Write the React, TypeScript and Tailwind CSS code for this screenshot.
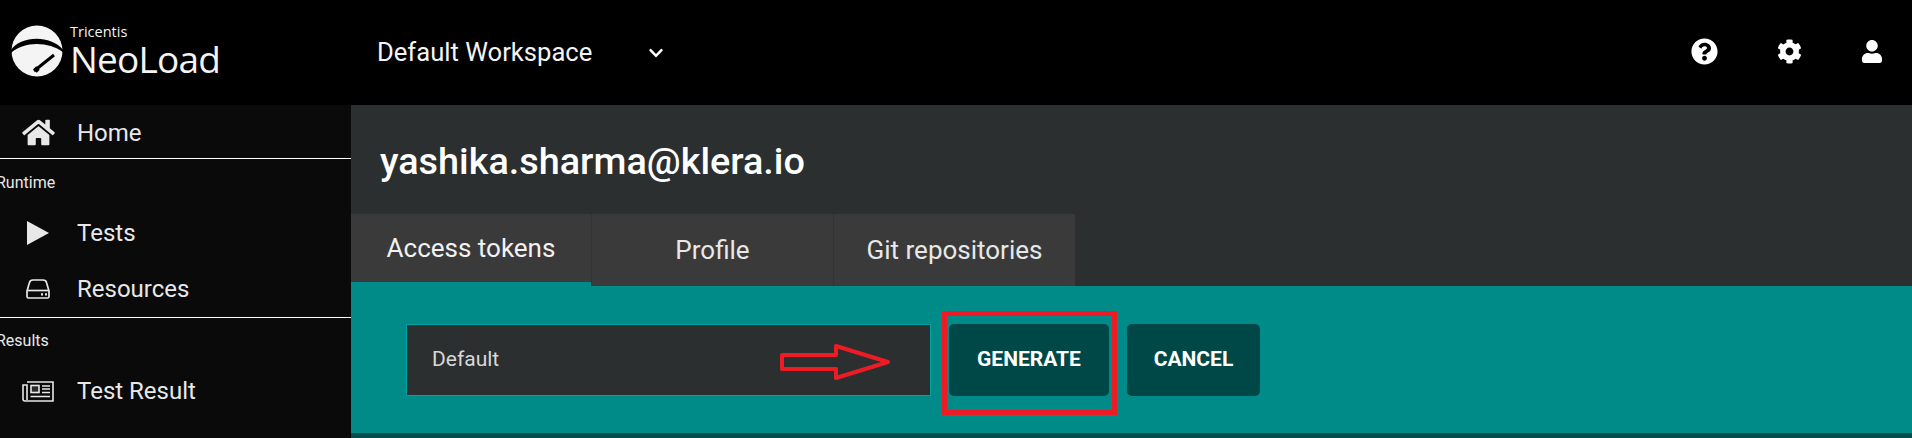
import type { ComponentType } from "react";
import {
  FaChartLine,
  FaChevronDown,
  FaCog,
  FaHome,
  FaQuestionCircle,
  FaUser,
} from "react-icons/fa";

const PlayIcon = ({ className }: { className?: string }) => (
  <svg viewBox="0 0 22 24" className={className} fill="currentColor">
    <path d="M0 0L22 12L0 24Z" />
  </svg>
);

const DriveIcon = ({ className }: { className?: string }) => (
  <svg viewBox="0 0 24 20" className={className} fill="none" stroke="currentColor" strokeWidth="1.7">
    <path d="M1 12L3.5 3.5Q4 1 7 1H17Q20 1 20.5 3.5L23 12V17.5Q23 19 21.5 19H2.5Q1 19 1 17.5Z" />
    <path d="M1 11.5H23" />
    <path d="M15 15.3H17M19 15.3H21" strokeWidth="2.2" />
  </svg>
);

const NewsIcon = ({ className }: { className?: string }) => (
  <svg viewBox="0 0 32 21" className={className} fill="none" stroke="currentColor" strokeWidth="1.6">
    <path d="M5 1H31V20H3Q1 20 1 18V4H5V19" />
    <rect x="9" y="4.5" width="8" height="7" fill="currentColor" fillOpacity="0.15" />
    <path d="M20 5H28M20 8H28M20 11.5H28M8.5 15.5H28" />
  </svg>
);

const NavItem = ({
  label,
  icon: Icon,
  iconClass,
  className = "h-14",
}: {
  label: string;
  icon: ComponentType<{ className?: string }>;
  iconClass: string;
  className?: string;
}) => (
  <div className={`flex shrink-0 items-center text-[24px] text-[#e8e8e8] ${className}`}>
    <div className="flex w-[77px] justify-center pr-[1px]">
      <Icon className={iconClass} />
    </div>
    {label}
  </div>
);

const SectionLabel = ({ label, className }: { label: string; className: string }) => (
  <div className={`flex shrink-0 items-center text-[16px] text-[#e8e8e8] ${className}`}>{label}</div>
);

const Logo = () => (
  <div className="flex items-center pb-[3px]">
    <svg viewBox="0 0 52 52" className="ml-[11px] h-[52px] w-[52px]">
      <circle cx="26" cy="26" r="25.5" fill="#f4f4f4" />
      <path d="M-1 27C6 11 40 8 53 26L53 28C38 16 12 16 -1 29Z" fill="#000" />
      <path d="M23 46L43 30" stroke="#000" strokeWidth="3" fill="none" />
      <path d="M24 46L27 43" stroke="#000" strokeWidth="5" fill="none" />
    </svg>
    <div className="ml-[7px] flex flex-col font-['Open_Sans',sans-serif] font-medium text-[#f4f4f4]">
      <span className="h-[18px] text-[14.5px] leading-[27px]">Tricentis</span>
      <span className="h-[48px] text-[37px] leading-[46px] tracking-[-0.8px]">NeoLoad</span>
    </div>
  </div>
);

const Tab = ({ label, active }: { label: string; active?: boolean }) => (
  <div
    className={
      active
        ? "flex w-[240px] items-center justify-center border-b-4 border-[#008a88] bg-[#3a3a3a] text-[26px] text-[#f2f2f2]"
        : "flex w-[242px] items-center justify-center border-l border-[#333333] bg-[#3a3a3a] text-[26px] text-[#e8e8e8]"
    }
  >
    {label}
  </div>
);

export default function App() {
  return (
    <div className="flex h-[438px] w-[1912px] flex-col overflow-hidden bg-black font-['Roboto',sans-serif]">
      <header className="flex h-[105px] shrink-0 items-center bg-black">
        <div className="w-[377px] shrink-0">
          <Logo />
        </div>
        <span className="w-[271px] text-[25.6px] text-[#f4f4f4]">Default Workspace</span>
        <FaChevronDown className="h-[16px] w-[16px] text-white" />
        <div className="ml-auto flex items-center pb-[3px] pr-[29px] text-white">
          <FaQuestionCircle className="h-[27px] w-[27px]" />
          <FaCog className="ml-[59px] h-[25px] w-[25px]" />
          <FaUser className="ml-[59px] h-[23px] w-[22px]" />
        </div>
      </header>

      <div className="flex min-h-0 flex-1">
        <aside className="flex w-[351px] shrink-0 flex-col overflow-hidden bg-[#0a0a0a]">
          <NavItem label="Home" icon={FaHome} iconClass="h-[29px] w-[33px]" className="h-[54px] border-b border-white pt-[2px]" />
          <SectionLabel label="Runtime" className="-ml-[4px] h-[46px] pt-[1px]" />
          <NavItem label="Tests" icon={PlayIcon} iconClass="h-[24px] w-[22px]" />
          <NavItem label="Resources" icon={DriveIcon} iconClass="h-[20px] w-[24px]" className="h-[57px] border-b border-white" />
          <SectionLabel label="Results" className="-ml-[4px] h-[44px] pt-[1px]" />
          <NavItem label="Test Result" icon={NewsIcon} iconClass="h-[21px] w-[32px]" className="h-14 pt-[2px]" />
          <NavItem label="Trends" icon={FaChartLine} iconClass="h-[36px] w-[26px]" className="h-[76px]" />
        </aside>

        <main className="flex min-w-0 flex-1 flex-col bg-[#2b2f2f]">
          <h1 className="flex h-[109px] shrink-0 items-center pl-[29px] pt-[3px] text-[37.8px] font-medium text-white">
            yashika.sharma@klera.io
          </h1>
          <div className="flex h-[72px] shrink-0">
            <Tab label="Access tokens" active />
            <Tab label="Profile" />
            <Tab label="Git repositories" />
          </div>
          <section className="flex h-[147px] shrink-0 items-start gap-[18px] bg-[#008a88] pl-[55px] pt-[38px]">
            <div className="relative flex h-[72px] w-[525px] items-center border border-[#00a3a3] bg-[#2b2f2f] pl-[25px] text-[21px] text-[#d8d8d8]">
              Default
              <svg viewBox="0 0 112 36" className="absolute left-[373px] top-[19px] h-[36px] w-[112px]">
                <path
                  d="M2 11H56V2L108 18L56 34V25H2Z"
                  fill="none"
                  stroke="#ed1c24"
                  strokeWidth="4"
                  strokeLinejoin="round"
                />
              </svg>
            </div>
            <div className="relative">
              <button className="flex h-[72px] w-[160px] items-center justify-center rounded-[5px] bg-[#004848] text-[21px] font-bold text-white">
                GENERATE
              </button>
              <div className="absolute -bottom-[19px] -left-[7px] -right-[8px] -top-[13px] border-[5px] border-[#ed1c24]" />
            </div>
            <button className="flex h-[72px] w-[133px] items-center justify-center rounded-[5px] bg-[#004848] text-[21px] font-bold text-white">
              CANCEL
            </button>
          </section>
          <div className="h-[5px] shrink-0 bg-[#004f4f]" />
        </main>
      </div>
    </div>
  );
}
